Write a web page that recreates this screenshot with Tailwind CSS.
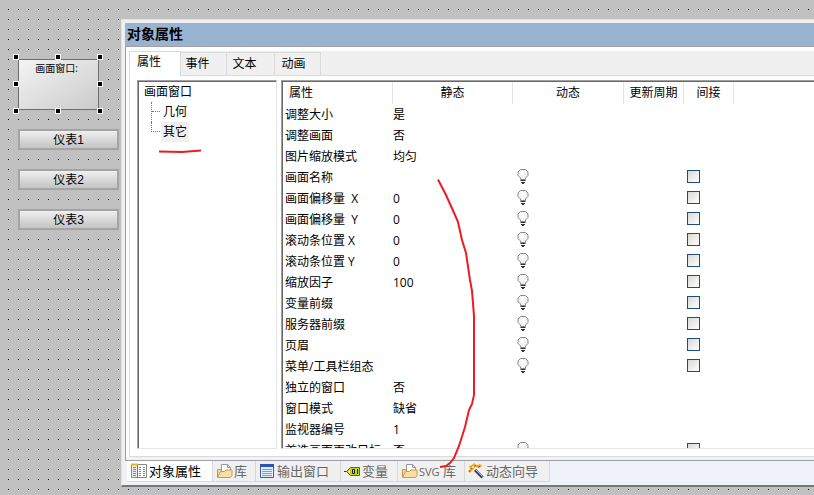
<!DOCTYPE html>
<html lang="zh-CN">
<head>
    <meta charset="UTF-8">
    <meta name="viewport" content="width=device-width, initial-scale=1.0">
    <title>对象属性</title>
    <script src="https://cdn.jsdelivr.net/npm/@tailwindcss/browser@4"></script>
</head>
<body class="relative flex h-screen overflow-hidden bg-[#c0c0c0] bg-[conic-gradient(at_1px_1px,transparent_75%,#000_0)] bg-[length:10px_10px] bg-[position:8px_9px] font-['Open_Sans','Noto_Sans_CJK_SC',sans-serif] text-xs text-black">
    <!-- shared icons -->
    <svg class="hidden">
        <symbol id="bulb" viewBox="0 0 12 15">
            <path d="M3.500 10.500V9L1 6.500V3L3.500.5h5L11 3v3.500L8.500 9v1.500z" fill="#f4f4f4" stroke="#888"/>
            <path d="M4 2h3v4H4z" fill="#fff"/>
            <path d="M3.500 11.500h5M4 13.500h4M5 14.500h2" stroke="#333" fill="none"/>
        </symbol>
        <symbol id="folder" viewBox="0 0 17 16">
            <path d="M1.500 14V6.500h3l1 1.500v6z" fill="#f6d9a0" stroke="#c69142"/>
            <path d="M5.500 10.500V1.500h6l3 3v6z" fill="#fff" stroke="#999"/>
            <path d="M11.500 1.500v3h3" fill="none" stroke="#999"/>
            <path d="M1.500 14.500 4.500 8.500l4 0 1.500-1.500h6v5.500l-1.500 2z" fill="#fbe0a2" stroke="#c99a50"/>
        </symbol>
    </svg>

    <!-- drawing canvas -->
    <main class="relative w-[121px] shrink-0">
        <div class="absolute left-[18px] top-[59px] h-[51px] w-[81px] border border-[#6e6e6e] bg-linear-to-br from-[#f4f4f4] to-[#cbcbcb] pr-1 text-center text-[10px] leading-4">
            画面窗口:
            <i class="absolute -left-[6px] -top-[6px] size-[6px] border border-white bg-black"></i>
            <i class="absolute left-[36px] -top-[6px] size-[6px] border border-white bg-black"></i>
            <i class="absolute -right-[5px] -top-[6px] size-[6px] border border-white bg-black"></i>
            <i class="absolute -left-[6px] top-[21px] size-[6px] border border-white bg-black"></i>
            <i class="absolute -right-[5px] top-[21px] size-[6px] border border-white bg-black"></i>
            <i class="absolute -left-[6px] -bottom-[5px] size-[6px] border border-white bg-black"></i>
            <i class="absolute left-[36px] -bottom-[5px] size-[6px] border border-white bg-black"></i>
            <i class="absolute -right-[5px] -bottom-[5px] size-[6px] border border-white bg-black"></i>
        </div>
        <div class="absolute left-[18px] top-[129px] flex w-[101px] flex-col gap-[19px] font-['Liberation_Sans','Noto_Sans_CJK_SC',sans-serif]">
            <button type="button" class="h-[21px] border-2 border-[#a4a4a4] bg-linear-to-b from-[#efefef] to-[#c4c4c4] leading-4">仪表1</button>
            <button type="button" class="h-[21px] border-2 border-[#a4a4a4] bg-linear-to-b from-[#efefef] to-[#c4c4c4] leading-4">仪表2</button>
            <button type="button" class="h-[21px] border-2 border-[#a4a4a4] bg-linear-to-b from-[#efefef] to-[#c4c4c4] leading-4">仪表3</button>
        </div>
    </main>

    <!-- property window -->
    <section class="mb-2 mt-[19px] flex min-w-0 flex-1 flex-col border-b-2 border-l border-t border-b-[#777] border-l-[#e3e3e3] border-t-[#e3e3e3] bg-[#f0f0f0] pl-[3px] pt-[3px]">
        <h1 class="h-[23px] shrink-0 bg-[#99b4d1] pl-[2px] text-[14px] font-bold leading-[22px]">对象属性</h1>
        <div class="flex min-h-0 flex-1 flex-col border-b border-l border-t border-[#a0a0a0] bg-white">
            <nav class="ml-[3px] mt-1 flex h-[25px] shrink-0 items-end bg-[#f0f0f0]">
                <button type="button" class="h-[25px] w-[52px] border-l border-r border-t border-[#dadada] bg-white pb-1 pr-3">属性</button>
                <button type="button" class="h-[24px] w-[46px] border-b border-r border-t border-[#dadada] pr-3">事件</button>
                <button type="button" class="h-[24px] w-[48px] border-b border-r border-t border-[#dadada] pr-3">文本</button>
                <button type="button" class="h-[24px] w-[46px] border-b border-r border-t border-[#dadada] pr-2">动画</button>
                <span class="flex-1 self-stretch border-b border-[#dadada]"></span>
            </nav>
            <div class="ml-[3px] flex min-h-0 flex-1 gap-1 border-b border-l border-[#dadada] pb-[7px] pl-[7px] pt-1">
                <div class="w-[140px] shrink-0 border border-b-[#e6e6e6] border-l-[#a0a0a0] border-r-[#e6e6e6] border-t-[#a0a0a0] pl-[6px] pt-px leading-5 shadow-[inset_1px_1px_#696969]">
                    <p>画面窗口</p>
                    <ul class="ml-[7px]">
                        <li class="flex border-l border-dotted border-[#777]">
                            <span class="mr-[1px] h-[10px] w-2 border-b border-dotted border-[#777]"></span>
                            <span class="px-[2px]">几何</span>
                        </li>
                        <li class="flex">
                            <span class="mr-[1px] h-[10px] w-[9px] border-b border-l border-dotted border-[#777]"></span>
                            <span class="bg-[#f0f0f0] px-[2px]">其它</span>
                        </li>
                    </ul>
                </div>
                <div class="min-w-0 flex-1 overflow-hidden border-b border-l border-t border-b-[#e6e6e6] border-l-[#a0a0a0] border-t-[#a0a0a0] pl-px pt-px shadow-[inset_1px_1px_#696969]">
                    <table class="w-full table-fixed border-separate border-spacing-0 text-left leading-5">
                        <colgroup>
                            <col class="w-[110px]"><col class="w-[120px]"><col class="w-[111px]"><col class="w-[60px]"><col class="w-[50px]"><col>
                        </colgroup>
                        <thead>
                            <tr class="h-[22px]">
                                <th class="border-r border-[#e5e5e5] p-0 pl-[6px] font-normal">属性</th>
                                <th class="border-r border-[#e5e5e5] p-0 text-center font-normal">静态</th>
                                <th class="border-r border-[#e5e5e5] p-0 text-center font-normal">动态</th>
                                <th class="border-r border-[#e5e5e5] p-0 text-center font-normal">更新周期</th>
                                <th class="border-r border-[#e5e5e5] p-0 text-center font-normal">间接</th>
                                <th></th>
                            </tr>
                        </thead>
                        <tbody id="rows"></tbody>
                    </table>
                </div>
            </div>
            <div class="h-[3px] shrink-0 bg-[#eff2fc]"></div>
        </div>
        <nav class="flex h-6 shrink-0 items-start bg-[#eff2fb] pl-[2px] text-[13px] leading-5 text-[#666]">
            <button type="button" class="flex h-[21px] w-[86px] items-center gap-[2px] border-b border-r border-[#d8d8d8] bg-white pl-1 text-black">
                <svg class="size-4 shrink-0" viewBox="0 0 16 16">
                    <path d="M.5 1.500h15v13H.5z" fill="#fff" stroke="#888"/>
                    <path d="M1 2h5v12H1z" fill="#eee"/>
                    <path d="M0 1.500h7" stroke="#f2b705" stroke-width="2"/>
                    <path d="M2 4.500h3M2 6.500h3M2 8.500h3M2 10.500h3M2 12.500h3M8 4.500h2M12 4.500h2M8 6.500h2M12 6.500h2M8 8.500h2M12 8.500h2M8 10.500h2M12 10.500h2M8 12.500h2M12 12.500h2" stroke="#888"/>
                    <path d="M6.500 2v13" stroke="#777"/>
                </svg>
                对象属性
            </button>
            <button type="button" class="flex h-[21px] w-[43px] items-center gap-[1px] border-b border-r border-[#d8d8d8] bg-[#f0f0f0] pl-[3px]">
                <svg class="h-4 w-[17px] shrink-0"><use href="#folder"/></svg>
                库
            </button>
            <button type="button" class="flex h-[21px] w-[85px] items-center gap-[3px] border-b border-r border-[#d8d8d8] bg-[#f0f0f0] pl-1">
                <svg class="h-[14px] w-[14px] shrink-0" viewBox="0 0 14 14">
                    <path d="M.5 1.500h13v12H.5z" fill="#e4efff" stroke="#3c5f9e"/>
                    <path d="M0 1.500h14" stroke="#2a55b8" stroke-width="3"/>
                    <path d="M2 5.500h10M2 7.500h10M2 9.500h10M2 11.500h10" stroke="#7f9cd4"/>
                </svg>
                输出窗口
            </button>
            <button type="button" class="flex h-[21px] w-[57px] items-center gap-[2px] border-b border-r border-[#d8d8d8] bg-[#f0f0f0] pl-[3px]">
                <svg class="h-[12px] w-[16px] shrink-0" viewBox="0 0 16 12">
                    <path d="M0 6.500h3" stroke="#333"/>
                    <path d="M2.500 6.500 6.500 2.500h9v8h-9z" fill="#c5d420" stroke="#5d6608"/>
                    <path d="M8.500 4.500v4h2v-4zM13.500 4v5" fill="none" stroke="#222"/>
                    <path d="M4.500 6h1.500v1.500H4.500z" fill="#fff"/>
                </svg>
                变量
            </button>
            <button type="button" class="flex h-[21px] w-[67px] items-center gap-[1px] border-b border-r border-[#d8d8d8] bg-[#f0f0f0] pl-[3px]">
                <svg class="h-4 w-[17px] shrink-0"><use href="#folder"/></svg>
                <span class="whitespace-nowrap"><span class="text-[11px]">SVG</span> 库</span>
            </button>
            <button type="button" class="flex h-[21px] w-[85px] items-center gap-[2px] border-b border-r border-[#d8d8d8] bg-[#f0f0f0] pl-[3px]">
                <svg class="size-4 shrink-0" viewBox="0 0 16 16">
                    <path d="M7 7l7.500 7.500" stroke="#445" stroke-width="3"/>
                    <path d="M7.500 6.500l7 7" stroke="#aab8dd"/>
                    <path d="M1 3l3-1 2-2 2 2 4-1 2 2-3 2-4-1-2 3-3 3-2-2 2-2z" fill="#f0a820"/>
                    <path d="M1 9l3-4 4-3M10 4l4-1" stroke="#c33a22" fill="none" stroke-dasharray="2 2"/>
                    <path d="M4 3h2v2H4zM9 1h2v1H9z" fill="#ffe973"/>
                </svg>
                动态向导
            </button>
        </nav>
    </section>

    <!-- red pen marks -->
    <svg class="pointer-events-none absolute left-0 top-0 h-[495px] w-[814px]" fill="none" stroke="#ed1c24" stroke-width="2">
        <path d="M159 151.500 182 152 201 150.500"/>
        <path d="M438 179.500 446 195 455 215 458 222 462 240 466 253 470 280 472 291 474 316V395L472 404 469 410 465 427 459 446 454 458 450 463 446 466 440 467"/>
    </svg>

    <script>
        // name, static value, has dynamic/indirect columns
        const props = [
            ["调整大小", "是", false],
            ["调整画面", "否", false],
            ["图片缩放模式", "均匀", false],
            ["画面名称", "", true],
            ["画面偏移量  X", "0", true],
            ["画面偏移量  Y", "0", true],
            ["滚动条位置 X", "0", true],
            ["滚动条位置 Y", "0", true],
            ["缩放因子", "100", true],
            ["变量前缀", "", true],
            ["服务器前缀", "", true],
            ["页眉", "", true],
            ["菜单/工具栏组态", "", true],
            ["独立的窗口", "否", false],
            ["窗口模式", "缺省", false],
            ["监视器编号", "1", false],
            ["首选画面更改目标", "否", true],
        ];

        document.getElementById("rows").innerHTML = props.map(([name, value, dynamic]) => `
            <tr class="h-[21px]">
                <td class="whitespace-pre p-0 pl-[2px]">${name}</td>
                <td class="p-0">${value}</td>
                <td class="p-0 pb-[2px] pl-1">${dynamic ? '<svg class="h-[15px] w-3"><use href="#bulb"/></svg>' : ""}</td>
                <td class="p-0"></td>
                <td class="p-0 pb-[2px] pl-[3px]">${dynamic ? `<input type="checkbox" aria-label="${name}" class="block size-[13px] appearance-none border border-[#1c4f80] bg-linear-to-br from-[#d9d9d6] to-white">` : ""}</td>
                <td class="p-0"></td>
            </tr>`).join("");
    </script>
</body>
</html>
